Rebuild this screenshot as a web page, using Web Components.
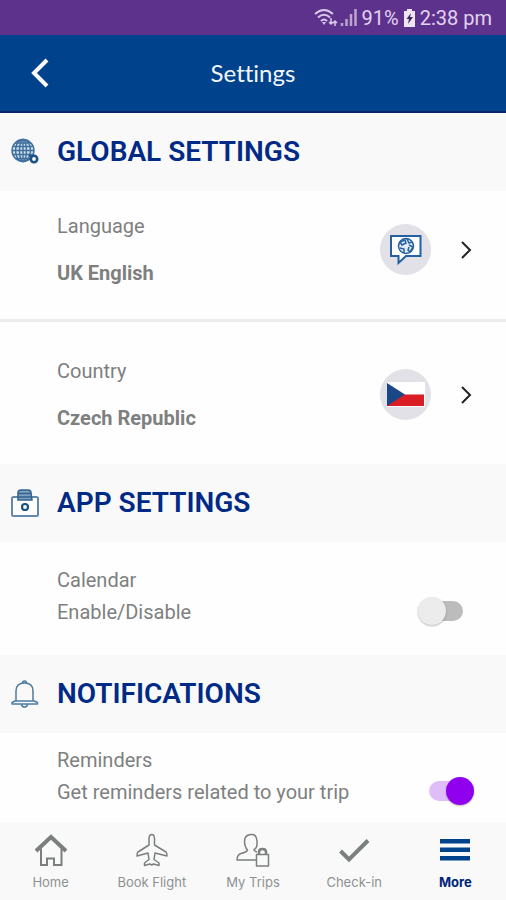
<!DOCTYPE html>
<html lang="en">
<head>
<meta charset="utf-8">
<meta name="viewport" content="width=device-width, initial-scale=1">
<title>Settings</title>
<style>
  html, body { margin: 0; }
  body {
    background: #fefefe;
    font-family: Roboto, "Liberation Sans", sans-serif;
    --brand: #00428b;
    --heading: #002a86;
    --muted: #7e8080;
    --panel: #f9f9f9;
    --round: "Lato", Inter, sans-serif;
  }
</style>
</head>
<body>
<settings-screen></settings-screen>

<script>
const define = (name, html, setup) => {
  const template = document.createElement('template');
  template.innerHTML = html;
  customElements.define(name, class extends HTMLElement {
    constructor() {
      super();
      this.attachShadow({ mode: 'open' }).append(template.content.cloneNode(true));
    }
    connectedCallback() { if (setup) setup(this, this.shadowRoot); }
  });
};

const icons = {
  globe: `<svg viewBox="0 0 28 28" fill="none" stroke="#3f6f9d" stroke-width="1.4">
    <circle cx="12" cy="12.500" r="11" fill="#cfdfeb"/><ellipse cx="12" cy="12.500" rx="7.500" ry="11"/><ellipse cx="12" cy="12.500" rx="3.500" ry="11"/>
    <path d="M12 1.500v22M1 12.500h22M2 8.500h20M4 5h16M2 16.500h20M4 20.500h16"/>
    <circle cx="23" cy="21" r="3.200" fill="#f9f9f9" stroke="#1d5284" stroke-width="2.600"/>
    <path d="M18 17l2.500 2" stroke="#1d5284" stroke-width="1.800"/></svg>`,
  toolbox: `<svg viewBox="0 0 28 28" fill="none" stroke="#6489ac" stroke-width="2">
    <rect x="1" y="8" width="26" height="19" rx="1.500" fill="#fff"/>
    <path d="M7 11V4q0-3 3-3h7q3 0 3 3l1 7z" fill="#7fa0be" stroke="#31618f" stroke-width="1.500"/>
    <path d="M7 4.500h13M7 8h14" stroke="#31618f" stroke-width="1.300"/>
    <circle cx="14" cy="18" r="3" stroke="#1d5284" stroke-width="2.200"/><path d="M10 18h1M17 18h1M14 14v1M14 21v1" stroke="#1d5284"/></svg>`,
  bell: `<svg viewBox="0 0 28 28" fill="none" stroke="#4f7b9f" stroke-width="1.500" stroke-linejoin="round">
    <path d="M5 21.500V11Q5 3 13.500 3T22 11v10.500M11.500 3Q11.500 1 13.500 1T15.500 3M5 20.500L1 22.500v1.500h25.500v-1.500L22 20.500M5 21h17M10.500 24.500Q11 27 13.500 27T16.500 24.500"/></svg>`,
  home: `<svg viewBox="0 0 34 34" fill="none" stroke="#7b7f7f" stroke-width="2">
    <path d="M2 18L17 4l15 14" stroke-width="4"/><path d="M7 15.500V32h6v-6.500h7V32h7.500V15.500"/></svg>`,
  plane: `<svg viewBox="0 0 34 34" fill="none" stroke="#7b7f7f" stroke-width="1.500" stroke-linejoin="round">
    <path d="M14 12V6Q14 1.500 16.700 1.500T19.500 6v6l11.500 7q1 .8 1 4l-12-3-1 6.500 5 3.500v2.500l-5.500-1.500-1.800 1-1.800-1L9.500 32.500V30l4.500-3.500-1-6.500-11 3q0-3 1-4z"/></svg>`,
  trips: `<svg viewBox="0 0 34 34" fill="none" stroke="#7b7f7f" stroke-width="1.500" stroke-linejoin="round">
    <path d="M20 27H1q0-5 4-6.500Q11 19 11.500 17 8.500 13.500 8.500 8T14.500 1.500 21 8 18 16.500q0 1.500 3 2.500"/>
    <rect x="20.500" y="21.500" width="12" height="11.500"/><path d="M23 21v-2q0-3 3.500-3T30 19v2" stroke-width="2.500"/></svg>`,
  check: `<svg viewBox="0 0 34 34" fill="none" stroke="#7b7f7f" stroke-width="4"><path d="M3.500 18l8.500 8.500L31 7.500"/></svg>`,
  menu: `<svg viewBox="0 0 34 34" fill="#00428b"><path d="M2 6h30v4.500H2zM2 14.500h30V19H2zM2 23h30v4.500H2z"/></svg>`,
  speech: `<svg viewBox="0 0 40 40" fill="none" stroke="#2561a0" stroke-width="2">
    <path d="M5 6h29.500v20H20l-7.500 7V26H5z" fill="#fff"/>
    <circle cx="20" cy="16" r="7.500" stroke-width="1.500" fill="#e3ebf4"/>
    <path d="M14 12l5-2 1 3-4 2zM21 9l2 4 3-1M14 18l4 1v4M23 15l4 2-3 5-2-2 1-3" stroke-width="1.500"/></svg>`,
  flag: `<svg viewBox="0 0 40 40"><path d="M1 7h38v25H1z" fill="#fff"/><path d="M1 19.500h37V31H1z" fill="#da1c25"/><path d="M1 8l18 11.500L1 31z" fill="#1b4787"/></svg>`
};

define('ui-icon', `
<style>:host { display: block; flex: none; } svg { display: block; width: 100%; height: 100%; }</style>
<span aria-hidden="true"></span>`,
(host, root) => { root.querySelector('span').innerHTML = icons[host.getAttribute('name')]; });

define('status-bar', `
<style>
  :host { display: flex; justify-content: flex-end; align-items: center; height: 35px; padding-right: 14px;
    background: #5d328d; color: #e3d3ef; font-size: 20px; line-height: 24px; gap: 4px; }
  svg { display: block; }
</style>
<svg width="44" height="20" viewBox="0 0 44 20" fill="none" stroke="#dac8e8" stroke-width="2" aria-hidden="true">
  <path d="M1 6Q10-2 19 6M4 9.500q6-5.500 12 0M7 13q3-3 6 0"/><path d="M8 14h4l-2 3z" fill="#dac8e8" stroke="none"/>
  <path d="M17 10v6M21 13v5M15 14l2 2 2-2M19 15l2-2 2 2" stroke-width="1.500"/>
  <path d="M28 15v3M32.500 11v7M37 6v12M41.500 1v17" stroke="#bda3d0" stroke-width="2.500"/>
</svg>
<span>91%</span>
<svg width="13" height="18" viewBox="0 0 13 18" aria-hidden="true"><path d="M4 0h5v2h3v16H1V2h3z" fill="#efe4f5"/><path d="M8 4L3.500 10H6l-1 5 5-7H7z" fill="#3c2552"/></svg>
<span>2:38 pm</span>`);

define('app-header', `
<style>
  :host { display: grid; grid-template-columns: 80px 1fr 80px; align-items: center; height: 76px;
    background: var(--brand); border-bottom: 2px solid #06256e; color: #f2f7fb; }
  button { display: grid; place-items: center; height: 76px; padding: 0; border: 0; background: none; color: #fff; }
  h1 { margin: 0; font: 400 24px/28px var(--round); font-variant-ligatures: none; text-align: center; }
</style>
<button type="button" aria-label="Back"><svg width="20" height="32" viewBox="0 0 20 32" fill="none" stroke="currentColor" stroke-width="4"><path d="M17 3L4 16l13 13"/></svg></button>
<h1><slot></slot></h1>`);

define('section-title', `
<style>
  :host { display: flex; align-items: center; gap: 18px; height: 78px; padding: 0 11px; background: var(--panel); color: var(--heading); }
  ui-icon { width: 28px; height: 28px; }
  h2 { margin: 0; font-size: 28px; line-height: 34px; font-weight: 600; }
</style>
<ui-icon></ui-icon><h2><slot></slot></h2>`,
(host, root) => {
  const icon = document.createElement('ui-icon');
  icon.setAttribute('name', host.getAttribute('icon'));
  root.querySelector('ui-icon').replaceWith(icon);
});

define('choice-row', `
<style>
  :host { display: block; }
  :host([divided]) { border-bottom: 3px solid #ececec; }
  button { display: flex; align-items: center; width: 100%; padding: 37px 34px 34px 57px; border: 0; background: none;
    color: var(--muted); font: inherit; font-size: 20px; line-height: 24px; text-align: left; }
  :host([divided]) button { padding-top: 23px; }
  .text { flex: 1; display: grid; gap: 23px; }
  .value { font-weight: 700; }
  .badge { display: grid; place-items: center; width: 51px; height: 51px; margin-right: 29px; border-radius: 50%; background: #e1e1e7; }
  ui-icon { width: 40px; height: 40px; }
</style>
<button type="button">
  <span class="text"><span><slot></slot></span><span class="value"><slot name="value"></slot></span></span>
  <span class="badge"></span>
  <svg width="12" height="20" viewBox="0 0 12 20" fill="none" stroke="#222" stroke-width="2" aria-hidden="true"><path d="M2 2l8 8-8 8"/></svg>
</button>`,
(host, root) => {
  const icon = document.createElement('ui-icon');
  icon.setAttribute('name', host.getAttribute('icon'));
  root.querySelector('.badge').replaceChildren(icon);
});

define('toggle-row', `
<style>
  :host { display: block; color: var(--muted); font-size: 20px; line-height: 24px; }
  div { display: flex; align-items: flex-end; padding: 26px 32px 31px 57px; }
  :host([compact]) div { padding: 15px 32px 18px 57px; }
  label { flex: 1; display: grid; gap: 8px; }
  input { appearance: none; flex: none; position: relative; width: 45px; height: 20px; margin: 0 11px 3px 0;
    border-radius: 10px; background: #bcbcbc; }
  input::before { content: ""; position: absolute; left: 0; top: -4px; width: 28px; height: 28px; border-radius: 50%;
    background: #ececec; box-shadow: 0 1px 2px #0004; }
  input:checked { background: #dfbdf9; margin-right: 0; }
  input:checked::before { left: auto; right: 0; background: #9100ee; }
</style>
<div><label for="toggle"><span><slot></slot></span><span><slot name="detail"></slot></span></label>
<input id="toggle" type="checkbox" role="switch"></div>`,
(host, root) => { root.querySelector('input').checked = host.hasAttribute('checked'); });

define('tab-link', `
<style>
  :host { display: block; flex: 1; }
  a { display: flex; flex-direction: column; align-items: center; gap: 6px; padding: 11px 0 9px; color: #8e9191;
    text-decoration: none; font: 400 13px/18px var(--tab-font); }
  :host([current]) a { color: #00257c; font-weight: 700; }
  ui-icon { width: 34px; height: 34px; }
</style>
<a href="#"><slot></slot></a>`,
(host, root) => {
  const link = root.querySelector('a');
  const icon = document.createElement('ui-icon');
  icon.setAttribute('name', host.getAttribute('icon'));
  link.prepend(icon);
  if (host.hasAttribute('current')) link.setAttribute('aria-current', 'page');
});

define('tab-bar', `
<style>
  :host { display: block; position: sticky; bottom: 0; background: var(--panel); --tab-font: Inter, sans-serif; }
  nav { display: flex; }
</style>
<nav aria-label="Main"><slot></slot></nav>`);

define('settings-screen', `
<style>
  :host { display: flex; flex-direction: column; min-height: 100vh; }
  main { flex: 1; }
</style>
<status-bar></status-bar>
<app-header>Settings</app-header>
<main>
  <section-title icon="globe">GLOBAL SETTINGS</section-title>
  <choice-row icon="speech" divided>Language<span slot="value">UK English</span></choice-row>
  <choice-row icon="flag">Country<span slot="value">Czech Republic</span></choice-row>
  <section-title icon="toolbox">APP SETTINGS</section-title>
  <toggle-row>Calendar<span slot="detail">Enable/Disable</span></toggle-row>
  <section-title icon="bell">NOTIFICATIONS</section-title>
  <toggle-row compact checked>Reminders<span slot="detail">Get reminders related to your trip</span></toggle-row>
</main>
<tab-bar>
  <tab-link icon="home">Home</tab-link>
  <tab-link icon="plane">Book Flight</tab-link>
  <tab-link icon="trips">My Trips</tab-link>
  <tab-link icon="check">Check-in</tab-link>
  <tab-link icon="menu" current>More</tab-link>
</tab-bar>`);
</script>
</body>
</html>
